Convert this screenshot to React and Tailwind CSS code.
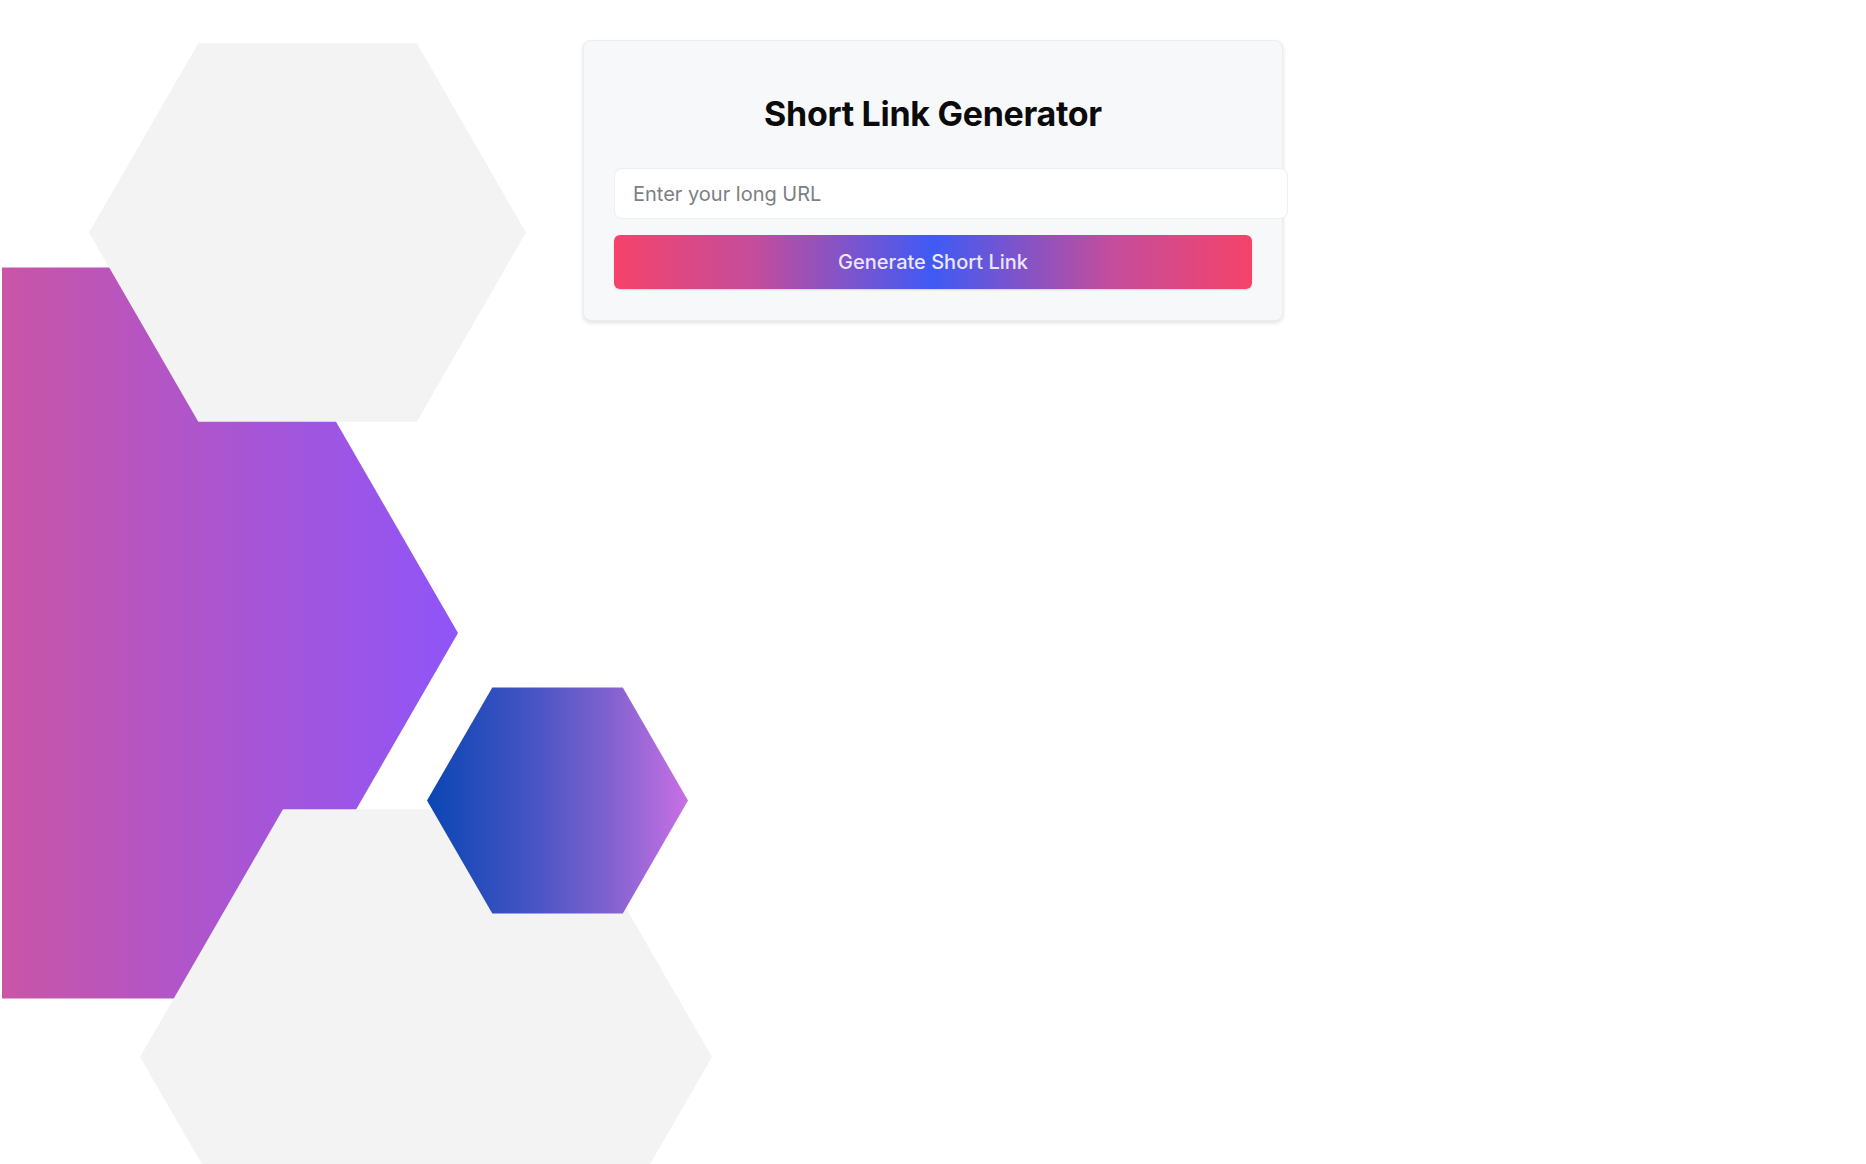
import React from "react";

function hex(cx, cy, R) {
  const h = (R * Math.sqrt(3)) / 2;
  return [
    [cx - R, cy],
    [cx - R / 2, cy - h],
    [cx + R / 2, cy - h],
    [cx + R, cy],
    [cx + R / 2, cy + h],
    [cx - R / 2, cy + h],
  ]
    .map((p) => p.map((v) => v.toFixed(1)).join(","))
    .join(" ");
}

function Background() {
  return (
    <svg
      className="absolute left-0 top-0 pointer-events-none"
      width="1866"
      height="1164"
      viewBox="0 0 1866 1164"
    >
      <defs>
        <linearGradient id="purple" x1="2" y1="0" x2="458" y2="0" gradientUnits="userSpaceOnUse">
          <stop offset="0" stopColor="#c955a6" />
          <stop offset="0.5" stopColor="#aa55d2" />
          <stop offset="1" stopColor="#8f55f8" />
        </linearGradient>
        <linearGradient id="blue" x1="427" y1="0" x2="688" y2="0" gradientUnits="userSpaceOnUse">
          <stop offset="0" stopColor="#0a46b4" />
          <stop offset="0.4" stopColor="#4654c4" />
          <stop offset="0.7" stopColor="#8062cf" />
          <stop offset="1" stopColor="#c870e4" />
        </linearGradient>
        <clipPath id="leftclip">
          <rect x="2" y="0" width="1864" height="1164" />
        </clipPath>
      </defs>
      <polygon points={hex(36, 633, 422)} fill="url(#purple)" clipPath="url(#leftclip)" />
      <polygon points={hex(307.5, 232.5, 218.5)} fill="#f3f3f3" />
      <polygon points={hex(426, 1057, 286)} fill="#f3f3f3" />
      <polygon points={hex(557.5, 800.5, 130.5)} fill="url(#blue)" />
    </svg>
  );
}

export default function App() {
  return (
    <div
      className="relative min-h-screen w-full overflow-hidden bg-white"
      style={{ fontFamily: "Inter, 'Noto Sans', 'Liberation Sans', sans-serif" }}
    >
      <Background />
      <div className="relative z-10 mx-auto mt-[40px] w-[700px] rounded-lg border border-[#ececee] bg-[#f7f8f9] px-[30px] pt-[53px] pb-[31px] shadow-[0_2px_4px_rgba(0,0,0,0.12)]">
        <h1 className="text-center text-[34px] font-bold leading-[40px] tracking-[-0.3px] text-[#0b0b0b]">
          Short Link Generator
        </h1>
        <input
          type="text"
          placeholder="Enter your long URL"
          className="mt-[34px] block h-[51px] w-[calc(100%+36px)] box-border rounded-lg border border-[#eeeef0] bg-white px-[18px] text-[20px] text-[#333] outline-none placeholder:text-[#7b7f86]"
        />
        <button
          type="button"
          className="mt-[16px] block h-[54px] w-full rounded-md bg-[linear-gradient(to_right,#f5436a_0%,#c44d9c_22%,#3f5af5_50%,#c44d9c_78%,#f5436a_100%)] text-[20px] font-medium text-[#ece6ff] shadow-[0_1px_2px_rgba(0,0,0,0.15)]"
        >
          Generate Short Link
        </button>
      </div>
    </div>
  );
}
